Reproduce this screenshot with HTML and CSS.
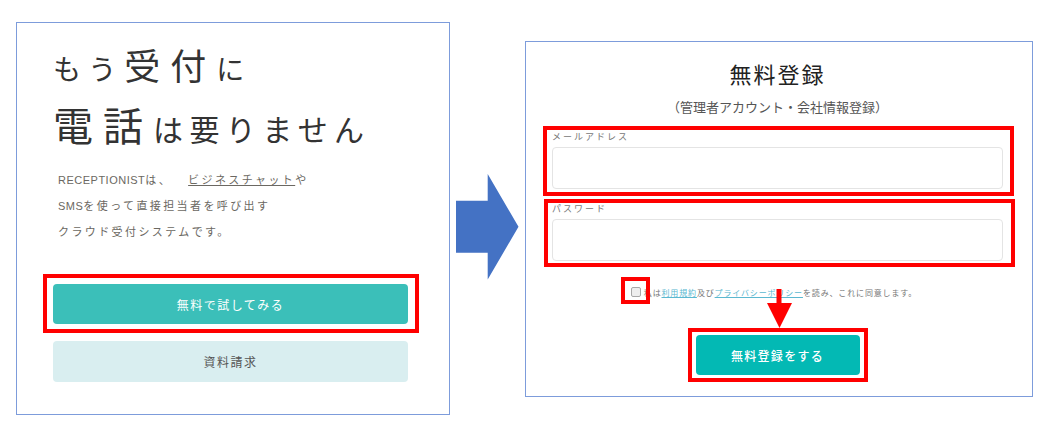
FILE: index.html
```html
<!DOCTYPE html>
<html lang="ja">
<head>
<meta charset="utf-8">
<title>RECEPTIONIST 無料登録</title>
<link rel="stylesheet" href="styles.css">
</head>
<body>
<div class="stage">
  <section class="lp">
    <div class="hero">
      <div class="hl"><span class="k1">もう</span><span class="kj1">受付</span><span class="k1">に</span></div>
      <div class="hl"><span class="kj2">電話</span><span class="k2">は要りません</span></div>
    </div>
    <p class="desc"><span class="en">RECEPTIONIST</span>は、<a class="ul">ビジネスチャット</a>や<br><span class="en">SMS</span>を使って直接担当者を呼び出す<br>クラウド受付システムです。</p>
    <div class="mark mark-try"><button class="btn btn-try">無料で試してみる</button></div>
    <button class="btn btn-doc">資料請求</button>
  </section>

  <svg class="bigarrow" width="63" height="106" viewBox="0 0 63 106">
    <polygon points="0,26.7 31.7,26.7 31.7,0 62.5,52.7 31.7,105.5 31.7,78.7 0,78.7" fill="#4472c4"/>
  </svg>

  <section class="rp">
    <h1 class="title">無料登録</h1>
    <p class="sub">（管理者アカウント・会社情報登録）</p>
    <div class="mark field field-mail">
      <label class="flabel">メールアドレス</label>
      <div class="input"></div>
    </div>
    <div class="mark field field-pass">
      <label class="flabel">パスワード</label>
      <div class="input"></div>
    </div>
    <div class="agree">
      <span class="cbwrap"><span class="cb"></span><span class="mark cbmark"></span></span>
      <span class="agree-text">私は<a class="lnk">利用規約</a>及び<a class="lnk">プライバシーポリシー</a>を読み、これに同意します。</span>
    </div>
    <div class="submit-row">
      <div class="mark mark-submit"><button class="btn btn-submit">無料登録をする</button></div>
    </div>
    <svg class="redarrow" width="25" height="39" viewBox="0 0 25 39">
      <rect x="9.5" y="0" width="5" height="15" fill="#ff0000"/>
      <polygon points="0,14 25,14 12.5,39" fill="#ff0000"/>
    </svg>
  </section>
</div>
</body>
</html>
```
FILE: styles.css
```css
* { box-sizing: border-box; }
html, body {
  margin: 0;
  padding: 0;
  background: #ffffff;
  width: 1050px;
  height: 440px;
  overflow: hidden;
  font-family: "Liberation Sans", "Noto Sans CJK JP", sans-serif;
}
.stage {
  display: flex;
  align-items: flex-start;
  gap: 6px;
  padding-left: 16px;
}

/* left panel */
.lp {
  margin-top: 22px;
  width: 434px;
  height: 393px;
  border: 1px solid #7d9cdb;
  padding: 11px 41px 0 36px;
  display: flex;
  flex-direction: column;
}
.hero { font-family: "Noto Sans CJK JP", sans-serif; color: #333333; }
.hl { height: 60px; line-height: 60px; white-space: nowrap; }
.k1 { font-size: 28px; letter-spacing: 8px; }
.kj1 { font-size: 36px; letter-spacing: 10px; }
.kj2 { font-size: 40px; letter-spacing: 10px; }
.k2 { font-size: 30px; letter-spacing: 6.4px; }

.desc {
  margin: 13px 0 0 5px;
  font-family: "Noto Sans CJK JP", sans-serif;
  font-size: 11px;
  letter-spacing: 2.4px;
  line-height: 25px;
  color: #6b6862;
}
.desc .en { font-family: "Liberation Sans", sans-serif; letter-spacing: 0.5px; }
.ul { text-decoration: underline; margin-left: 16px; color: #6b6862; }

.mark { border: 4px solid #ff0000; }
.mark-try {
  margin: 30px -11px 0 -10px;
  padding: 6px 7px 5px 6px;
}
.btn {
  display: block;
  border: 0;
  margin: 0;
  padding: 0;
  font-family: "Noto Sans CJK JP", sans-serif;
  cursor: pointer;
}
.btn-try {
  width: 100%;
  height: 40px;
  border-radius: 4px;
  background: #3bbfb9;
  color: #ffffff;
  font-size: 12px;
  letter-spacing: 1.5px;
}
.btn-doc {
  margin-top: 8px;
  width: 100%;
  height: 41px;
  border-radius: 4px;
  background: #d9eef0;
  color: #555555;
  font-size: 12px;
  letter-spacing: 1.5px;
}

.bigarrow { margin-top: 174px; flex: none; }

/* right panel */
.rp {
  position: relative;
  margin-top: 41px;
  width: 508px;
  height: 356px;
  border: 1px solid #7d9cdb;
  padding: 16px 29px 0 26px;
  display: flex;
  flex-direction: column;
  font-family: "Noto Sans CJK JP", sans-serif;
}
.title {
  margin: 0;
  text-align: center;
  font-size: 22px;
  font-weight: 400;
  letter-spacing: 2px;
  line-height: 30px;
  color: #222222;
}
.sub {
  margin: 9px 0 0;
  text-align: center;
  font-size: 13px;
  line-height: 20px;
  color: #555555;
}
.field { display: flex; flex-direction: column; }
.field-mail {
  margin: 9px -11px 0 -9px;
  padding: 1px 7px 3px 5px;
  gap: 4px;
}
.field-pass {
  margin: 3px -12px 0 -8px;
  padding: 0 8px 2px 4px;
  gap: 5px;
}
.flabel {
  font-size: 9px;
  letter-spacing: 2px;
  line-height: 12px;
  color: #777777;
}
.field-pass .flabel { line-height: 11px; }
.input {
  height: 42px;
  border: 1px solid #e4e4e4;
  border-radius: 4px;
  background: #ffffff;
}

.agree {
  margin-top: 15px;
  height: 20px;
  display: flex;
  align-items: center;
  justify-content: center;
  gap: 3px;
  padding-right: 7px;
}
.cbwrap { position: relative; width: 10px; height: 10px; flex: none; }
.cb {
  display: block;
  width: 10px;
  height: 10px;
  border: 1px solid #a8a8a8;
  border-radius: 2px;
  background: #eeeeee;
}
.cbmark {
  position: absolute;
  left: -10px;
  top: -10px;
  width: 29px;
  height: 27px;
}
.agree-text {
  font-size: 8px;
  letter-spacing: 0.85px;
  color: #777777;
  white-space: nowrap;
}
.lnk { color: #5bb8d0; text-decoration: underline; }

.submit-row {
  margin-top: 26px;
  display: flex;
  justify-content: center;
}
.mark-submit { padding: 3px 4px; }
.btn-submit {
  width: 164px;
  height: 40px;
  border-radius: 4px;
  background: #03b9b4;
  color: #ffffff;
  font-size: 12px;
  font-weight: 500;
  letter-spacing: 1.3px;
}
.redarrow {
  position: absolute;
  left: 241px;
  top: 247px;
}
```
